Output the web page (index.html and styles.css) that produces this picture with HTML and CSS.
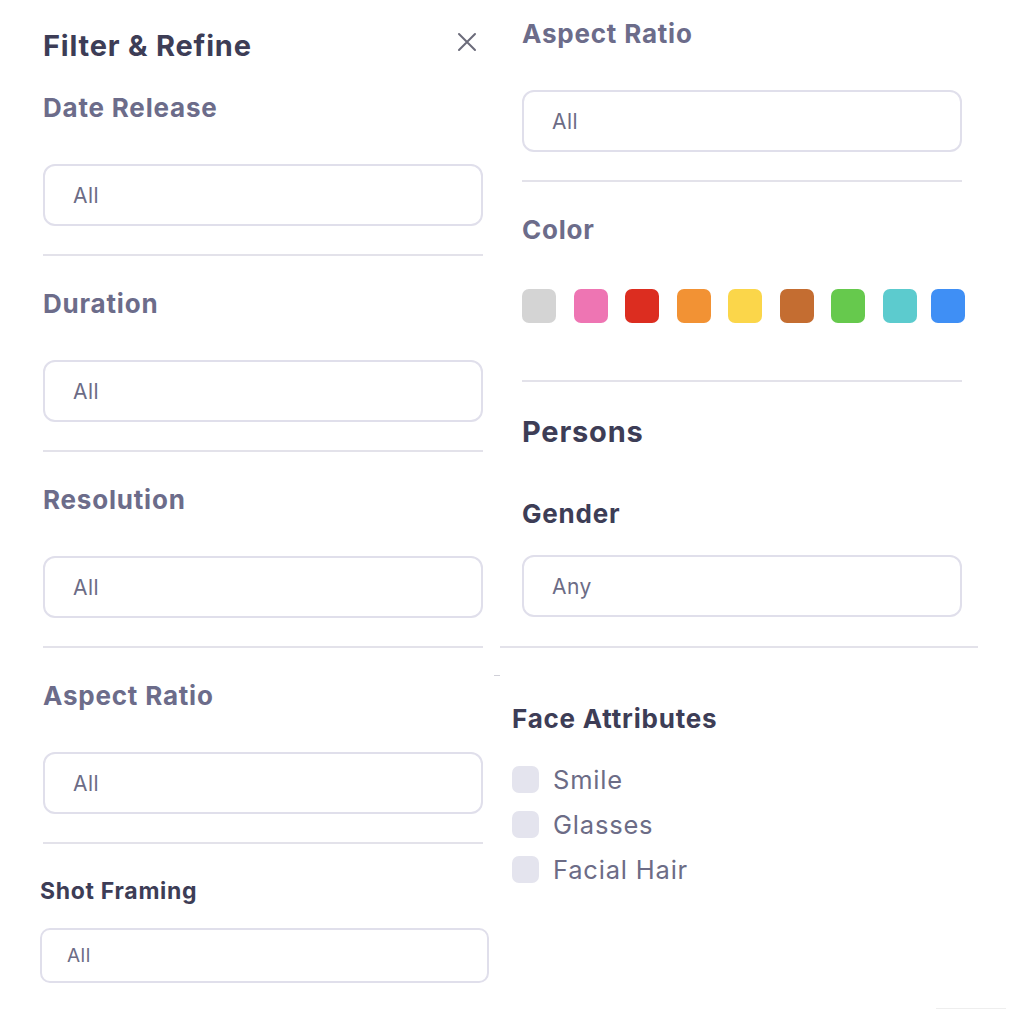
FILE: index.html
```html
<!DOCTYPE html>
<html>
<head>
<meta charset="utf-8">
<link rel="stylesheet" href="styles.css">
</head>
<body>
<div class="page">
  <div class="col left">
    <div class="title-row">
      <h1 class="title">Filter &amp; Refine</h1>
      <svg class="close" width="20" height="20" viewBox="0 0 20 20"><path d="M2 2L18 18M18 2L2 18" stroke="#6b6b7a" stroke-width="2" stroke-linecap="round"/></svg>
    </div>
    <section class="sec first">
      <h2 class="label">Date Release</h2>
      <div class="field">All</div>
    </section>
    <hr class="div">
    <section class="sec">
      <h2 class="label">Duration</h2>
      <div class="field">All</div>
    </section>
    <hr class="div">
    <section class="sec">
      <h2 class="label">Resolution</h2>
      <div class="field">All</div>
    </section>
    <hr class="div">
    <section class="sec">
      <h2 class="label">Aspect Ratio</h2>
      <div class="field">All</div>
    </section>
    <hr class="div">
    <section class="shot">
      <h2 class="label-sm">Shot Framing</h2>
      <div class="field-sm">All</div>
    </section>
  </div>
  <div class="col right">
    <section class="sec top">
      <h2 class="label">Aspect Ratio</h2>
      <div class="field">All</div>
    </section>
    <hr class="div">
    <section class="sec">
      <h2 class="label">Color</h2>
      <div class="swatches">
        <span class="sw c1"></span><span class="sw c2"></span><span class="sw c3"></span><span class="sw c4"></span><span class="sw c5"></span><span class="sw c6"></span><span class="sw c7"></span><span class="sw c8"></span><span class="sw c9"></span>
      </div>
    </section>
    <hr class="div div-color">
    <h2 class="persons">Persons</h2>
    <h3 class="gender">Gender</h3>
    <div class="field">Any</div>
    <div class="wide-div-wrap">
      <hr class="wide-div">
      <span class="dash"></span>
    </div>
    <div class="face">
      <h3 class="face-title">Face Attributes</h3>
      <ul class="checks">
        <li><span class="box"></span>Smile</li>
        <li><span class="box"></span>Glasses</li>
        <li><span class="box"></span>Facial Hair</li>
      </ul>
    </div>
  </div>
</div>
<span class="corner-line"></span>
</body>
</html>
```

FILE: styles.css
```css
* { box-sizing: border-box; }
html, body { margin: 0; padding: 0; background: #ffffff; }
body {
  font-family: Inter, "Noto Sans", sans-serif;
  width: 1010px;
  height: 1010px;
  overflow: hidden;
  position: relative;
}
.page {
  display: grid;
  grid-template-columns: 500px 510px;
}
.col.left { padding-left: 43px; }
.col.right { padding-left: 22px; }

.title-row {
  display: flex;
  justify-content: space-between;
  align-items: center;
  margin-top: 29px;
  height: 34px;
  width: 440px;
}
.title {
  margin: 0;
  font-size: 29px;
  line-height: 34px;
  font-weight: 700;
  color: #3d3d56;
  letter-spacing: 0.8px;
}
.close { margin-right: 6px; margin-top: -8px; }

.sec { width: 440px; padding-top: 33px; }
.sec.first { padding-top: 30px; }
.sec.top { padding-top: 19px; }
.label {
  margin: 0;
  font-size: 26px;
  line-height: 30px;
  font-weight: 700;
  color: #6c6c8a;
  letter-spacing: 0.8px;
}
.field {
  margin-top: 41px;
  width: 440px;
  height: 62px;
  border: 2px solid #e0dfeb;
  border-radius: 12px;
  padding-left: 28px;
  display: flex;
  align-items: center;
  font-size: 21px;
  letter-spacing: 0.5px;
  color: #6c6c86;
}
.div {
  margin: 28px 0 0 0;
  width: 440px;
  border: 0;
  height: 2px;
  background: #e3e2ea;
}
.shot { margin-left: -3px; padding-top: 33px; }
.label-sm {
  margin: 0;
  font-size: 23px;
  line-height: 28px;
  font-weight: 700;
  color: #3d3d56;
  letter-spacing: 0.7px;
}
.field-sm {
  margin-top: 23px;
  width: 449px;
  height: 55px;
  border: 2px solid #e0dfeb;
  border-radius: 10px;
  padding-left: 25px;
  display: flex;
  align-items: center;
  font-size: 19px;
  letter-spacing: 0.5px;
  color: #6c6c86;
}

.swatches {
  display: flex;
  gap: 17.5px;
  margin-top: 44px;
}
.sw {
  width: 34px;
  height: 34px;
  border-radius: 7px;
  flex: none;
}
.c1 { background: #d4d4d4; }
.c2 { background: #ee75b3; }
.c3 { background: #dc2d20; }
.c4 { background: #f29234; }
.c5 { background: #fbd64a; }
.c6 { background: #c46d31; }
.c7 { background: #66c94d; }
.c8 { background: #5ccbce; }
.c9 { background: #3f8ff5; margin-left: -3px; }
.div-color { margin-top: 57px; }

.persons {
  margin: 33px 0 0 0;
  font-size: 29px;
  line-height: 34px;
  font-weight: 700;
  color: #3d3d56;
  letter-spacing: 0.8px;
}
.gender {
  margin: 50px 0 0 0;
  font-size: 26px;
  line-height: 30px;
  font-weight: 700;
  color: #3d3d56;
  letter-spacing: 0.8px;
}
.gender + .field { margin-top: 26px; }

.wide-div-wrap { margin-left: -22px; padding-top: 29px; }
.wide-div {
  margin: 0;
  width: 478px;
  border: 0;
  height: 2px;
  background: #e3e2ea;
}
.dash {
  display: block;
  width: 6px;
  height: 1px;
  margin: 27px 0 0 -6px;
  background: #d0d0d8;
}
.face { margin-left: -10px; padding-top: 28px; }
.face-title {
  margin: 0;
  font-size: 26px;
  line-height: 30px;
  font-weight: 700;
  color: #3d3d56;
  letter-spacing: 0.8px;
}
.checks {
  list-style: none;
  margin: 23px 0 0 0;
  padding: 0;
}
.checks li {
  display: flex;
  align-items: center;
  height: 45px;
  font-size: 25.5px;
  letter-spacing: 0.8px;
  color: #6c6c86;
}
.box {
  width: 27px;
  height: 27px;
  border-radius: 7px;
  background: #e4e4ee;
  margin-right: 14px;
  flex: none;
}
.corner-line {
  position: absolute;
  left: 936px;
  top: 1008px;
  width: 70px;
  height: 1px;
  background: #eeeeee;
}
```
